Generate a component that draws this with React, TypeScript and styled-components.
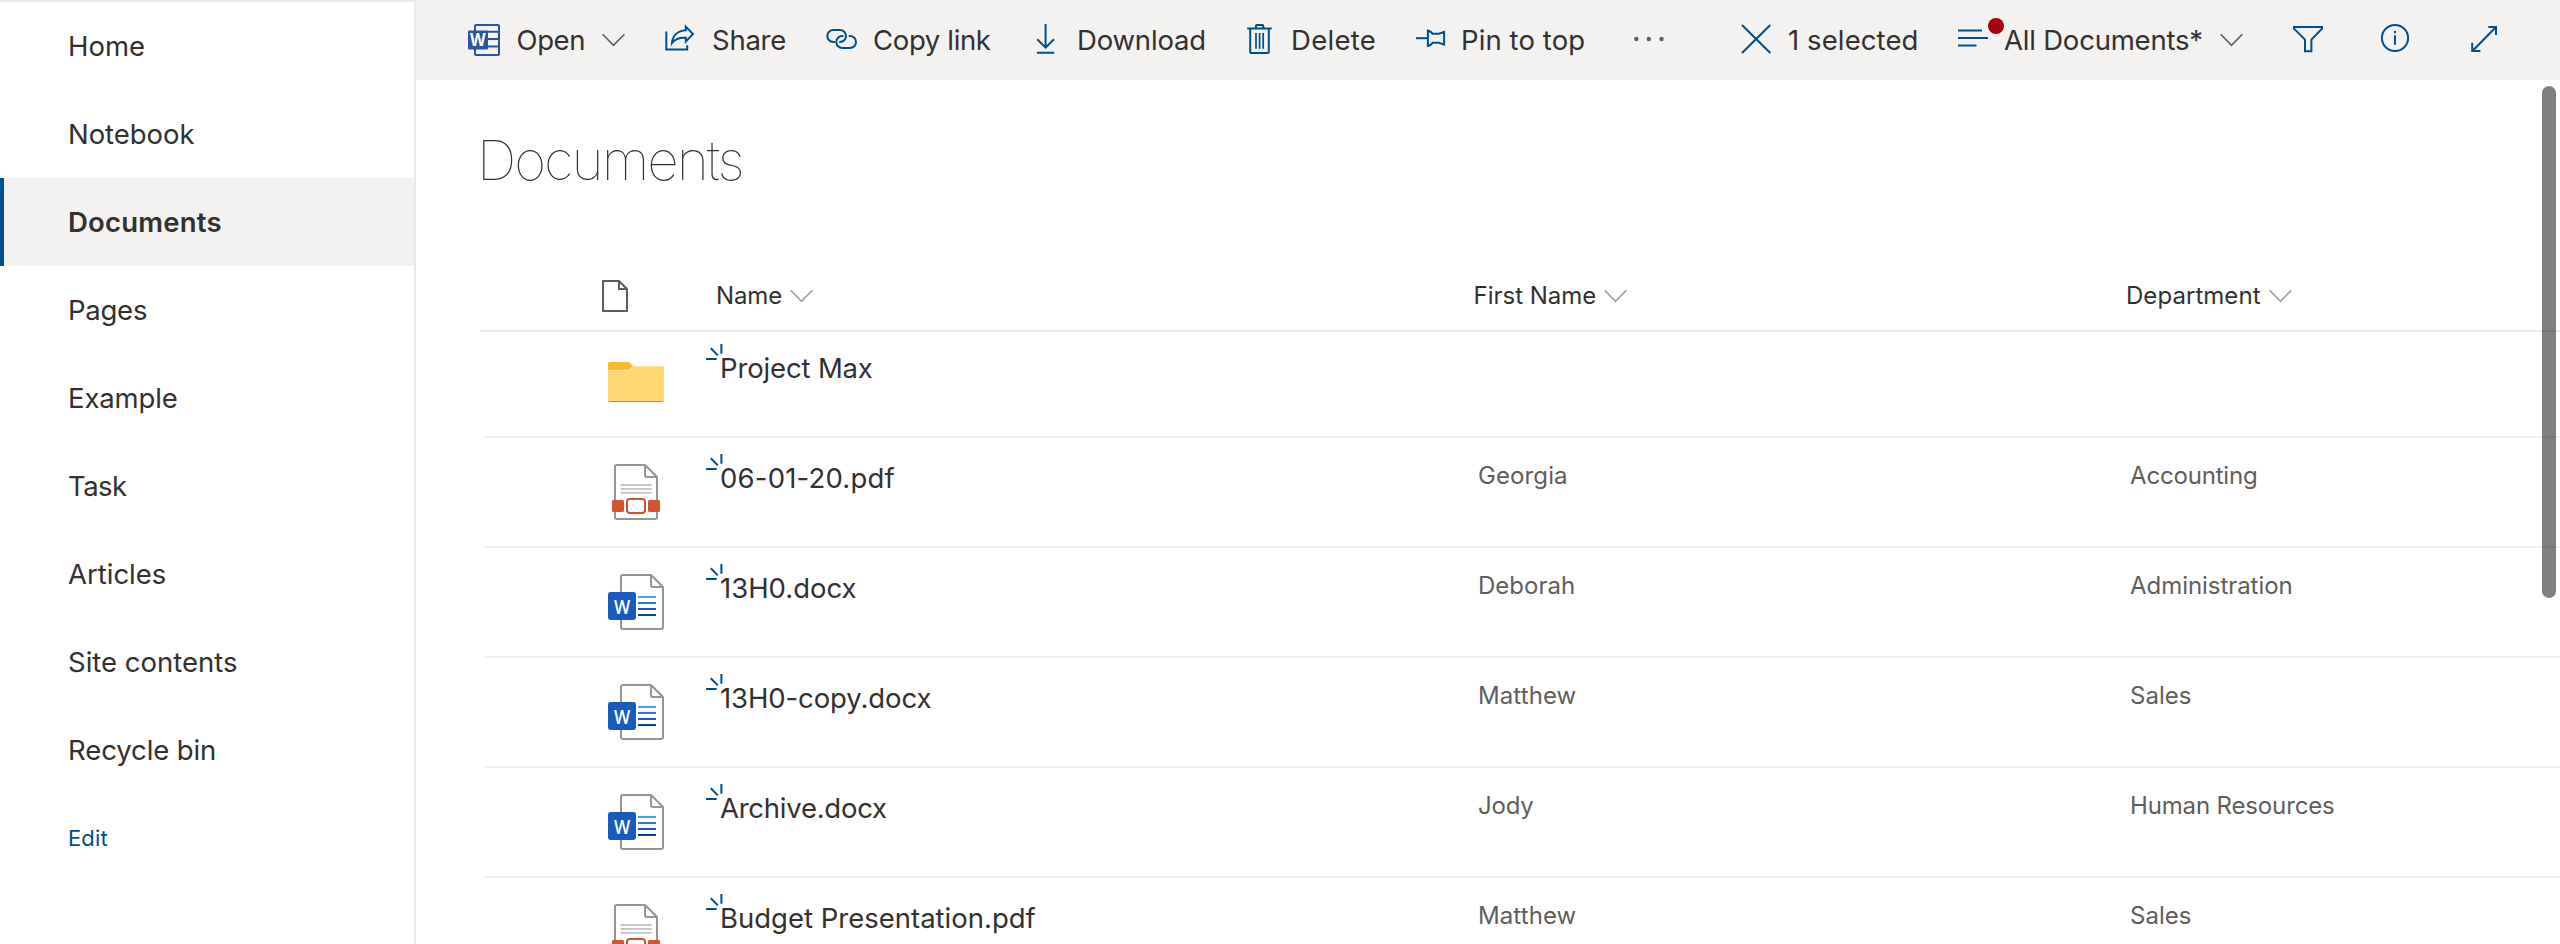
import React from 'react';
import styled, { createGlobalStyle, css } from 'styled-components';

const GlobalStyle = createGlobalStyle`
  * { box-sizing: border-box; }
  html, body { margin: 0; padding: 0; background: #fff; }
  body {
    font-family: Inter, "Liberation Sans", sans-serif;
    color: #323130;
    overflow: hidden;
  }
  svg { display: block; flex: none; overflow: visible; }
`;

const Page = styled.div`
  display: flex;
  width: 100%;
  height: 944px;
  overflow: hidden;
`;

const Sidebar = styled.nav`
  flex: none;
  width: 416px;
  border-right: 2px solid #eaeaea;
  border-top: 2px solid #eaeaea;
`;

const NavItem = styled.a<{ $active?: boolean; $track?: number }>`
  display: flex;
  align-items: center;
  height: 88px;
  padding-left: 68px;
  font-size: 27.5px;
  white-space: pre;
  letter-spacing: ${p => p.$track ?? 0}px;
  ${p =>
    p.$active &&
    css`
      padding-left: 64px;
      border-left: 4px solid #004e8c;
      background: #f3f2f1;
      font-weight: 600;
    `}
`;

const EditLink = styled(NavItem)`
  font-size: 22px;
  color: #004e8c;
`;

const Main = styled.main`
  position: relative;
  flex: 1;
  min-width: 0;
`;

const Toolbar = styled.header`
  display: flex;
  justify-content: space-between;
  height: 80px;
  padding: 0 60px 0 52px;
  background: #f3f2f1;
`;

const CommandGroup = styled.div`
  display: flex;
  align-items: center;
`;

const Command = styled.button<{ $width: number }>`
  display: flex;
  align-items: center;
  flex: none;
  width: ${p => p.$width}px;
  height: 80px;
  padding: 0;
  border: 0;
  background: none;
  font: inherit;
  font-size: 27.5px;
  color: inherit;
`;

const CommandLabel = styled.span<{ $track: number; $gap?: number }>`
  margin-left: ${p => p.$gap ?? 16}px;
  white-space: nowrap;
  letter-spacing: ${p => p.$track}px;
`;

const ChevronSlot = styled.span<{ $gap: number }>`
  margin-left: ${p => p.$gap}px;
`;

const IconCommands = styled.div`
  display: flex;
  gap: 56px;
`;

const ViewIcon = styled.span`
  position: relative;
`;

const UnsavedDot = styled.i`
  position: absolute;
  top: -6px;
  left: 30px;
  width: 16px;
  height: 16px;
  border-radius: 50%;
  background: #a4000f;
`;

const Title = styled.h1`
  margin: 0;
  padding: 40px 0 0 61px;
  height: 181px;
  font-size: 55px;
  line-height: 80px;
  font-weight: 100;
  letter-spacing: -2px;
`;

const List = styled.section`
  padding-left: 64px;
`;

const ListHeader = styled.div`
  display: grid;
  grid-template-columns: 122px 114px 757.5px 652.5px 1fr;
  align-items: center;
  height: 71px;
  border-bottom: 2px solid #eaeaea;
  font-size: 24px;
`;

const HeaderCell = styled.div<{ $track: number }>`
  display: flex;
  align-items: center;
  gap: 8px;
  white-space: nowrap;
  letter-spacing: ${p => p.$track}px;
`;

const Row = styled.div`
  display: grid;
  grid-template-columns: 124px 112px 758px 652px 1fr;
  height: 110px;
  margin-left: 4px;
  border-bottom: 2px solid #f1f1f1;

  &:nth-child(2) {
    margin-top: -4px;
  }
`;

const FileType = styled.div`
  grid-column: 2;
  padding-top: 26px;
`;

const FileName = styled.div<{ $track: number }>`
  position: relative;
  height: 80px;
  font-size: 27.5px;
  line-height: 80px;
  white-space: nowrap;
  letter-spacing: ${p => p.$track}px;
`;

const NewMark = styled.span`
  position: absolute;
  left: -14px;
  top: 16px;
`;

const Meta = styled.div<{ $track: number }>`
  height: 76px;
  line-height: 76px;
  font-size: 24px;
  color: #605e5c;
  white-space: nowrap;
  letter-spacing: ${p => p.$track}px;
`;

const ScrollThumb = styled.div`
  position: absolute;
  top: 86px;
  right: 4px;
  width: 14px;
  height: 512px;
  border-radius: 7px;
  background: rgba(0, 0, 0, 0.5);
`;

const Icon = ({ children }: { children: React.ReactNode }) => (
  <svg width="32" height="32" viewBox="0 0 32 32" fill="none" stroke="#004e8c" strokeWidth="2">
    {children}
  </svg>
);

const Chevron = ({ color = '#605e5c', width = 1.6 }: { color?: string; width?: number }) => (
  <svg width="23" height="14" viewBox="0 0 23 14" fill="none" stroke={color} strokeWidth={width}>
    <path d="M.6 1.2 11.5 12.4 22.4 1.2" />
  </svg>
);

const WordAppIcon = () => (
  <svg width="32" height="32" viewBox="0 0 32 32" fill="none" stroke="#2b579a" strokeWidth="2">
    <rect x="7" y="1" width="24" height="30" rx="1" />
    <path d="M19 7.7H31M19 15H31M19 22.5H31" />
    <rect x="0" y="6.5" width="20" height="19" rx="1" fill="#2b579a" stroke="none" />
    <text x="2" y="22.4" textLength="15.6" lengthAdjust="spacingAndGlyphs" fontFamily="Open Sans" fontWeight="700" fontSize="18" fill="#fff" stroke="none">W</text>
  </svg>
);

const ShareIcon = () => (
  <Icon>
    <path d="M2.3 7.5V25.6H23.2V21.3" />
    <path d="M21.8 2.6 29 10 21.8 17.6V13.8C15.5 13.4 10.8 15.2 8 19 8.6 11.8 13.6 6.7 21.8 6.2Z" />
  </Icon>
);

const LinkIcon = () => (
  <Icon>
    <path d="M10 18H8.3A6 6 0 0 1 8.3 6H15A6 6 0 0 1 15 18H14.2" />
    <path d="M23.8 12H25A6 6 0 0 1 25 24H17.3A6 6 0 0 1 17.3 12H18.5" />
  </Icon>
);

const DownloadIcon = () => (
  <Icon>
    <path d="M16.6 0V23.3M8.2 15.2 16.6 23.6 25 15.2M8 28.8H25.2" />
  </Icon>
);

const TrashIcon = () => (
  <Icon>
    <path d="M4.2 4.6H28.8M12.9 4.6V2Q12.9 1 13.9 1H19.3Q20.3 1 20.3 2V4.6M7.2 4.6V27.4Q7.2 29 8.8 29H24.2Q25.8 29 25.8 27.4V4.6" />
    <path d="M13 9V24.7M16.6 9V24.7M20.2 9V24.7" strokeWidth="1.7" />
  </Icon>
);

const PinIcon = () => (
  <Icon>
    <path d="M3 14.2H14.5" />
    <path d="M14.9 6.6C17.2 7 18.4 8 19.6 9.7H26L31.1 8V20.6L26 18.8H19.6C18.4 20.5 17.2 21.5 14.9 21.9Z" />
  </Icon>
);

const MoreIcon = () => (
  <svg width="32" height="32" viewBox="0 0 32 32" fill="#605e5c">
    <circle cx="3.3" cy="15" r="2.2" />
    <circle cx="15.8" cy="15" r="2.2" />
    <circle cx="28.5" cy="15" r="2.2" />
  </svg>
);

const ClearIcon = () => (
  <Icon>
    <path d="M2 1 30.3 29M30.3 1 2 29" />
  </Icon>
);

const LinesIcon = () => (
  <Icon>
    <path d="M0 6.6H24M0 14.1H30M0 21.4H18.5" />
  </Icon>
);

const FilterIcon = () => (
  <Icon>
    <path d="M2 3H30V4.6L19.4 15.6V27.2H13V15.6L2 4.6Z" />
  </Icon>
);

const InfoIcon = () => (
  <Icon>
    <circle cx="15" cy="14" r="13.1" />
    <path d="M15 7V9.2M15 11.3V20.8" />
  </Icon>
);

const ExpandIcon = () => (
  <Icon>
    <path d="M4.5 27 28 3M20.3 3H28V11M4.2 18.8V27H12.4" />
  </Icon>
);

const FileHeaderIcon = () => (
  <svg width="26" height="32" viewBox="0 0 26 32" fill="none" stroke="#605e5c" strokeWidth="2">
    <path d="M1 1H17L25 9V31H1ZM17 1V9H25" />
  </svg>
);

const SparkleIcon = () => (
  <svg width="18" height="16" viewBox="0 0 18 16" fill="none" stroke="#004e8c" strokeWidth="2">
    <path d="M15.4 0V9.7M4.8 4.2 11.8 11.4M0 15H10.7" />
  </svg>
);

const FolderIcon = () => (
  <svg width="56" height="56" viewBox="0 0 56 56">
    <path d="M0 10Q0 8 2 8H19Q21 8 22.3 9.2L25.6 12.4H54.4Q56 12.4 56 14V44H0Z" fill="#ffb92e" />
    <path d="M2 48Q0 48 0 46V44H56V46Q56 48 54 48Z" fill="#d98235" />
    <path d="M0 16H18.5Q20.5 16 21.8 14.8L23.8 13Q25 12 26.7 12H54Q56 12 56 14V45.4Q56 47 54.4 47H1.6Q0 47 0 45.4Z" fill="#ffd872" />
    <path d="M0 16.4H18.5Q20.7 16.4 22.2 15.2L24.2 13.4Q25.4 12.4 27 12.4H55" fill="none" stroke="#ffe7a4" strokeWidth=".8" />
  </svg>
);

const PdfIcon = () => (
  <svg width="56" height="56" viewBox="0 0 56 56" fill="none">
    <path d="M37 1H9Q7 1 7 3V53Q7 55 9 55H47Q49 55 49 53V13ZM37 1V11Q37 13 39 13H49" fill="#fff" stroke="#979593" strokeWidth="2" strokeLinejoin="round" />
    <path d="M12.6 21H43.6M12.6 25H43.6M12.6 28.8H43.6" stroke="#c8c6c4" strokeWidth="2" />
    <rect x="4" y="36" width="12" height="12" rx="1.5" fill="#d35230" />
    <rect x="40" y="36" width="12" height="12" rx="1.5" fill="#d35230" />
    <rect x="19" y="35" width="18" height="14" rx="3" stroke="#d35230" strokeWidth="2" />
  </svg>
);

const DocxIcon = () => (
  <svg width="56" height="56" viewBox="0 0 56 56" fill="none">
    <path d="M43 1H15Q13 1 13 3V53Q13 55 15 55H53Q55 55 55 53V13ZM43 1V11Q43 13 45 13H55" fill="#fff" stroke="#979593" strokeWidth="2" strokeLinejoin="round" />
    <path d="M30 23H48" stroke="#41a5ee" strokeWidth="2" />
    <path d="M30 29H48" stroke="#2b7cd3" strokeWidth="2" />
    <path d="M30 35H48" stroke="#185abd" strokeWidth="2" />
    <path d="M30 41H48" stroke="#103f91" strokeWidth="2" />
    <rect y="18" width="28" height="28" rx="2.4" fill="#185abd" />
    <text x="6.1" y="39.9" textLength="16.2" lengthAdjust="spacingAndGlyphs" fontFamily="Open Sans" fontWeight="600" fontSize="19.4" fill="#fff">W</text>
  </svg>
);

const fileIcons = { folder: FolderIcon, pdf: PdfIcon, docx: DocxIcon };

type Cell = [text: string, track: number];
type FileRow = { type: keyof typeof fileIcons; name: Cell; first?: Cell; dept?: Cell };

const files: FileRow[] = [
  { type: 'folder', name: ['Project Max', -0.15] },
  { type: 'pdf', name: ['06-01-20.pdf', 0.2], first: ['Georgia', 0.1], dept: ['Accounting', -0.18] },
  { type: 'docx', name: ['13H0.docx', 0], first: ['Deborah', 0], dept: ['Administration', -0.05] },
  { type: 'docx', name: ['13H0-copy.docx', -0.1], first: ['Matthew', 0.1], dept: ['Sales', 0] },
  { type: 'docx', name: ['Archive.docx', -0.25], first: ['Jody', -0.2], dept: ['Human Resources', -0.15] },
  { type: 'pdf', name: ['Budget Presentation.pdf', 0], first: ['Matthew', 0.1], dept: ['Sales', 0] },
];

const navItems: Cell[] = [
  ['Home', 0],
  ['Notebook', -0.05],
  ['Documents', 0.2],
  ['Pages', -0.25],
  ['Example', -0.15],
  ['Task', -0.6],
  ['Articles', 0],
  ['Site contents', 0],
  ['Recycle bin', -0.1],
];

export default function App() {
  return (
    <>
      <GlobalStyle />
      <Page>
        <Sidebar>
          {navItems.map(([label, track]) => (
            <NavItem key={label} $active={label === 'Documents'} $track={track}>
              {label}
            </NavItem>
          ))}
          <EditLink $track={0.15}>Edit</EditLink>
        </Sidebar>

        <Main>
          <Toolbar>
            <CommandGroup>
              <Command $width={196}>
                <WordAppIcon />
                <CommandLabel $track={-0.4} $gap={16.5}>Open</CommandLabel>
                <ChevronSlot $gap={17}><Chevron /></ChevronSlot>
              </Command>
              <Command $width={161}>
                <ShareIcon />
                <CommandLabel $track={-0.25}>Share</CommandLabel>
              </Command>
              <Command $width={204}>
                <LinkIcon />
                <CommandLabel $track={-0.35}>Copy link</CommandLabel>
              </Command>
              <Command $width={214}>
                <DownloadIcon />
                <CommandLabel $track={-0.17}>Download</CommandLabel>
              </Command>
              <Command $width={170}>
                <TrashIcon />
                <CommandLabel $track={0.3}>Delete</CommandLabel>
              </Command>
              <Command $width={220}>
                <PinIcon />
                <CommandLabel $track={0.1}>Pin to top</CommandLabel>
              </Command>
              <Command $width={32}>
                <MoreIcon />
              </Command>
            </CommandGroup>
            <CommandGroup>
              <Command $width={218}>
                <ClearIcon />
                <CommandLabel $track={0.1} $gap={16}>1 selected</CommandLabel>
              </Command>
              <Command $width={334}>
                <ViewIcon>
                  <LinesIcon />
                  <UnsavedDot />
                </ViewIcon>
                <CommandLabel $track={-0.2} $gap={14}>All Documents*</CommandLabel>
                <ChevronSlot $gap={17}><Chevron /></ChevronSlot>
              </Command>
              <IconCommands>
                <Command $width={32}><FilterIcon /></Command>
                <Command $width={32}><InfoIcon /></Command>
                <Command $width={32}><ExpandIcon /></Command>
              </IconCommands>
            </CommandGroup>
          </Toolbar>

          <Title>Documents</Title>

          <List>
            <ListHeader>
              <span />
              <FileHeaderIcon />
              <HeaderCell $track={-0.15}>Name<Chevron color="#a19f9d" /></HeaderCell>
              <HeaderCell $track={0}>First Name<Chevron color="#a19f9d" /></HeaderCell>
              <HeaderCell $track={0.05}>Department<Chevron color="#a19f9d" /></HeaderCell>
            </ListHeader>
            {files.map(({ type, name, first, dept }) => {
              const TypeIcon = fileIcons[type];
              return (
                <Row key={name[0]}>
                  <FileType><TypeIcon /></FileType>
                  <FileName $track={name[1]}>
                    <NewMark><SparkleIcon /></NewMark>
                    {name[0]}
                  </FileName>
                  {first && <Meta $track={first[1]}>{first[0]}</Meta>}
                  {dept && <Meta $track={dept[1]}>{dept[0]}</Meta>}
                </Row>
              );
            })}
          </List>
          <ScrollThumb />
        </Main>
      </Page>
    </>
  );
}
